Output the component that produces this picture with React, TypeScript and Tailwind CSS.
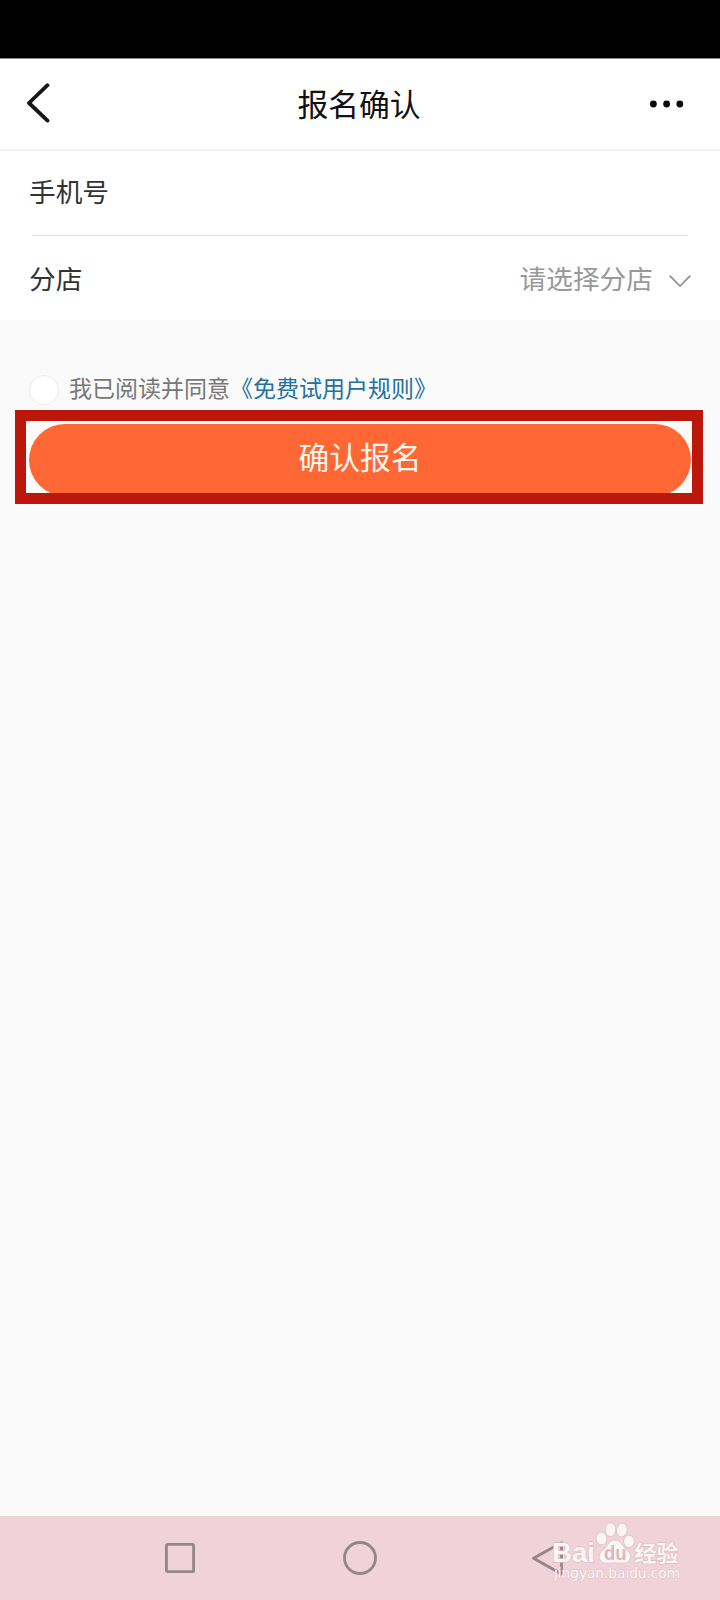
import React from 'react';

const BackIcon = () => (
  <svg className="w-6 h-10" viewBox="0 0 24 40" fill="none" stroke="#161616" strokeWidth="3.8" strokeLinecap="round" strokeLinejoin="round">
    <path d="M20.5 2.2 L2 20 L20.5 37.6" />
  </svg>
);

const MoreIcon = () => (
  <svg className="w-[34px] h-2" viewBox="0 0 34 8" fill="#0a0a0a">
    <circle cx="3.4" cy="4" r="3.4" />
    <circle cx="16.6" cy="4" r="3.4" />
    <circle cx="29.8" cy="4" r="3.4" />
  </svg>
);

const ChevronIcon = () => (
  <svg className="mt-1.5 w-[22px] h-3" viewBox="0 0 22 12" fill="none" stroke="#909090" strokeWidth="1.7">
    <path d="M0.7 0.7 L11 11 L21.3 0.7" />
  </svg>
);

const Watermark = () => (
  <svg className="w-[136px] h-[72px] pointer-events-none" viewBox="0 0 136 72">
    <g fill="#fcf5f6" stroke="#dcbec5" strokeWidth="1.4" paintOrder="stroke">
      <text x="2" y="46.3" fontSize="28.5" fontWeight="700" textLength="43" lengthAdjust="spacingAndGlyphs" fontFamily="Liberation Sans, sans-serif">Bai</text>
      <ellipse cx="51.5" cy="22.5" rx="5" ry="6" transform="rotate(-12 51.5 22.5)" />
      <ellipse cx="60.5" cy="13.5" rx="4.8" ry="6.6" />
      <ellipse cx="71.8" cy="14" rx="4.8" ry="6.6" transform="rotate(10 71.8 14)" />
      <ellipse cx="79" cy="25.3" rx="5" ry="5.8" />
      <path d="M65 24.5 C58.5 24.5 57.5 31 53.5 34 C49 37.5 49 41 50.5 43.5 C52.5 47.5 57 47 65 46.6 C73 47 77.5 47.5 79.5 43.5 C81 41 81 37.5 76.5 34 C72.5 31 71.5 24.5 65 24.5 Z" />
      <text x="84.5" y="44.5" fontSize="22" fontWeight="700" textLength="44" fontFamily="Noto Sans CJK SC, sans-serif">经验</text>
    </g>
    <text x="54" y="43.5" fontSize="20" fontWeight="700" fill="#dab8c0" textLength="22.5" lengthAdjust="spacingAndGlyphs" fontFamily="Liberation Sans, sans-serif">du</text>
    <text x="4" y="62.3" fontSize="14" fill="#fcf5f6" stroke="#dcbec5" strokeWidth="0.8" paintOrder="stroke" textLength="126" lengthAdjust="spacingAndGlyphs" fontFamily="DejaVu Sans, sans-serif">jingyan.baidu.com</text>
  </svg>
);

const NavBar: React.FC = () => (
  <nav className="relative flex h-[84px] bg-[#efd3d9] pt-[25px] pl-[164px]">
    <svg className="w-[32px] h-[34px]" viewBox="0 0 32 34" fill="none" stroke="#958588" strokeWidth="2.8">
      <rect x="2.4" y="3.4" width="27.2" height="27.2" rx="1.2" />
    </svg>
    <svg className="ml-[147px] w-[34px] h-[34px]" viewBox="0 0 34 34" fill="none" stroke="#958588" strokeWidth="2.8">
      <circle cx="17" cy="17" r="15.5" />
    </svg>
    <svg className="ml-[153px] w-[36px] h-[36px]" viewBox="0 0 36 36" fill="none" stroke="#958588" strokeWidth="2.8" strokeLinejoin="round">
      <path d="M3.5 17.3 L31.5 1.7 V33 Z" />
    </svg>
    <div className="absolute left-[550px] top-0">
      <Watermark />
    </div>
  </nav>
);

const App: React.FC = () => {
  return (
    <div className="flex flex-col w-[720px] h-[1600px] bg-[#fafafa] font-['Noto_Sans_CJK_SC',sans-serif]">
      <div className="h-[58px] bg-black" />

      <header className="flex items-center justify-between h-[93px] pl-[27px] pr-[36px] bg-white border-t border-t-[#8a8a8a] border-b-2 border-b-[#f2f2f2]">
        <div className="w-[34px] -mt-0.5"><BackIcon /></div>
        <h1 className="pl-[7px] pb-[3px] text-[30.8px] leading-[44px] text-[#111]">报名确认</h1>
        <MoreIcon />
      </header>

      <section className="bg-white">
        <div className="flex items-center h-[84px] pl-[29px] pb-1">
          <span className="text-[26.7px] leading-10 text-[#333]">手机号</span>
        </div>
        <div className="mx-8 h-px bg-[#dcdfdf]" />
        <div className="flex items-center justify-between h-[84px] pl-[29px] pr-[29px]">
          <span className="text-[26.7px] leading-10 text-[#333]">分店</span>
          <div className="flex items-center gap-4">
            <span className="text-[26.7px] leading-10 text-[#999]">请选择分店</span>
            <ChevronIcon />
          </div>
        </div>
      </section>

      <div className="flex items-center h-[90px] pt-[49px] pl-[29px] text-[23px] leading-8">
        <span className="w-[30px] h-[30px] rounded-full bg-white border border-[#ececec]" />
        <span className="ml-[10px] pb-[5px] text-[#777]">我已阅读并同意</span>
        <span className="pb-[5px] text-[#2470a0]">《免费试用户规则》</span>
      </div>

      <div className="ml-[15px] w-[688px] h-[94px] border-[11px] border-[#bb180b] bg-[#fdfaf9] pt-[3px] px-[2px] overflow-hidden">
        <button className="block w-[662px] ml-px h-[72px] rounded-full bg-[#ff6834] pb-[8px] text-[30.8px] leading-[64px] text-[#fff6ee]">
          确认报名
        </button>
      </div>

      <main className="flex-1" />
      <NavBar />
    </div>
  );
};

export default App;
